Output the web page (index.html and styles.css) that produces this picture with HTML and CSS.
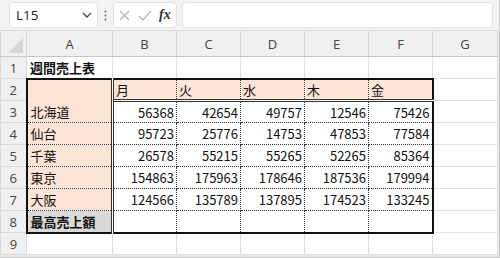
FILE: index.html
```html
<!DOCTYPE html>
<html lang="ja">
<head>
    <meta charset="UTF-8">
    <title>週間売上表</title>
    <link rel="stylesheet" href="styles.css">
</head>
<body>

<div class="window">
    <div class="toolbar">
        <div class="namebox">
            <span>L15</span>
            <svg class="chevron" width="10" height="6" viewBox="0 0 10 6"><path d="M1 1 L5 5 L9 1" fill="none" stroke="#444" stroke-width="1.3"/></svg>
        </div>
        <svg class="grip" width="3" height="11" viewBox="0 0 3 11"><circle cx="1.5" cy="1.5" r="1" fill="#666"/><circle cx="1.5" cy="5.5" r="1" fill="#666"/><circle cx="1.5" cy="9.5" r="1" fill="#666"/></svg>
        <div class="fxbox">
            <svg width="11" height="11" viewBox="0 0 11 11"><path d="M1 1 L10 10 M10 1 L1 10" stroke="#b4b4b4" stroke-width="1.2" fill="none"/></svg>
            <svg width="14" height="11" viewBox="0 0 14 11"><path d="M1 6 L5 10 L13 1" stroke="#b4b4b4" stroke-width="1.2" fill="none"/></svg>
            <span class="fx">fx</span>
        </div>
        <div class="formula"></div>
    </div>

    <table class="sheet">
        <colgroup>
            <col class="c-row"><col class="c-a"><col class="c-n"><col class="c-n"><col class="c-n"><col class="c-n"><col class="c-n"><col class="c-g">
        </colgroup>
        <tr class="head">
            <th class="corner"><span class="tri"></span></th><th>A</th><th>B</th><th>C</th><th>D</th><th>E</th><th>F</th><th>G</th>
        </tr>
        <tr>
            <th>1</th><td class="title">週間売上表</td><td></td><td></td><td></td><td></td><td></td><td></td>
        </tr>
        <tr class="days">
            <th>2</th><td class="t name first"></td><td class="t d">月</td><td class="t d">火</td><td class="t d">水</td><td class="t d">木</td><td class="t d last">金</td><td></td>
        </tr>
        <tr class="data top">
            <th>3</th><td class="t name">北海道</td><td class="t">56368</td><td class="t">42654</td><td class="t">49757</td><td class="t">12546</td><td class="t last">75426</td><td></td>
        </tr>
        <tr class="data">
            <th>4</th><td class="t name">仙台</td><td class="t">95723</td><td class="t">25776</td><td class="t">14753</td><td class="t">47853</td><td class="t last">77584</td><td></td>
        </tr>
        <tr class="data">
            <th>5</th><td class="t name">千葉</td><td class="t">26578</td><td class="t">55215</td><td class="t">55265</td><td class="t">52265</td><td class="t last">85364</td><td></td>
        </tr>
        <tr class="data">
            <th>6</th><td class="t name">東京</td><td class="t">154863</td><td class="t">175963</td><td class="t">178646</td><td class="t">187536</td><td class="t last">179994</td><td></td>
        </tr>
        <tr class="data">
            <th>7</th><td class="t name">大阪</td><td class="t">124566</td><td class="t">135789</td><td class="t">137895</td><td class="t">174523</td><td class="t last">133245</td><td></td>
        </tr>
        <tr class="data bottom">
            <th>8</th><td class="t name max">最高売上額</td><td class="t"></td><td class="t"></td><td class="t"></td><td class="t"></td><td class="t last"></td><td></td>
        </tr>
        <tr>
            <th>9</th><td></td><td></td><td></td><td></td><td></td><td></td><td></td>
        </tr>
    </table>
</div>

</body>
</html>
```

FILE: styles.css
```css
body {
    margin: 0;
    padding: 0;
    background-color: #fff;
    font-family: "Noto Sans CJK JP", "Noto Sans", sans-serif;
}
.window {
    width: 500px;
    height: 258px;
    box-sizing: border-box;
    background-color: #e9e9e9;
    border-right: 1px solid #c9c9c9;
    border-bottom: 1px solid #c9c9c9;
    overflow: hidden;
}
.toolbar {
    height: 30px;
    background-color: #f3f3f3;
    display: flex;
    align-items: flex-start;
    padding-top: 2px;
    box-sizing: border-box;
}
.namebox {
    margin-left: 9px;
    width: 89px;
    height: 26px;
    box-sizing: border-box;
    background-color: #fff;
    border: 1px solid #e2e2e2;
    border-radius: 4px;
    display: flex;
    align-items: center;
    justify-content: space-between;
    padding: 0 5px 0 6px;
    font-family: "Open Sans", sans-serif;
    font-size: 13.5px;
    color: #222;
}
.grip {
    margin: 8px 6px 0 6px;
}
.fxbox {
    width: 64px;
    height: 26px;
    box-sizing: border-box;
    background-color: #fff;
    border: 1px solid #e2e2e2;
    border-radius: 4px;
    display: flex;
    align-items: center;
    gap: 8px;
    padding-left: 5px;
}
.fx {
    font-family: "Liberation Serif", serif;
    font-style: italic;
    font-weight: bold;
    font-size: 14px;
    color: #333;
    margin-left: -1px;
}
.formula {
    margin-left: 5px;
    width: 311px;
    height: 26px;
    box-sizing: border-box;
    background-color: #fff;
    border: 1px solid #e2e2e2;
    border-radius: 4px;
}
.sheet {
    border-collapse: collapse;
    table-layout: fixed;
    width: 497px;
    background-color: #fff;
}
.c-row { width: 26px; }
.c-a { width: 86px; }
.c-n { width: 64px; }
.c-g { width: 65px; }
.sheet tr { height: 22px; }
.sheet tr.head { height: 26px; }
.sheet th {
    background-color: #f0f0f0;
    border: 1px solid #dadada;
    font-family: "Open Sans", sans-serif;
    font-weight: normal;
    font-size: 13px;
    color: #444;
    padding: 0;
    text-align: center;
}
.sheet .head th {
    border-bottom: 1px solid #c6c6c6;
}
.corner {
    position: relative;
}
.tri {
    position: absolute;
    right: 3px;
    bottom: 3px;
    width: 0;
    height: 0;
    border-left: 15px solid transparent;
    border-bottom: 15px solid #d6d6d6;
}
.sheet td {
    border: 1px solid #e1e1e1;
    padding: 0 3px;
    font-size: 13px;
    line-height: 1;
    color: #111;
    white-space: nowrap;
    overflow: hidden;
}
/* 表の中の罫線 */
.sheet td.t {
    border: 1px dotted #333;
}
.title {
    font-weight: bold;
}
.days td.t {
    background-color: #fce4d6;
    border-top: 2px solid #111;
    border-bottom: 3px double #333;
    padding-left: 2px;
}
.sheet td.name {
    text-align: left;
    background-color: #fce4d6;
    border-left: 2px solid #111;
    border-right: 3px double #333;
}
.days td.name {
    border-bottom: hidden;
}
.data.top td.name {
    border-top: hidden;
}
.data td {
    text-align: right;
    padding-right: 2px;
}
.data td.max {
    background-color: #d9d9d9;
    font-weight: bold;
}
.data.bottom td.t {
    border-bottom: 2px solid #111;
}
.sheet td.last {
    border-right: 2px solid #111;
}
```
